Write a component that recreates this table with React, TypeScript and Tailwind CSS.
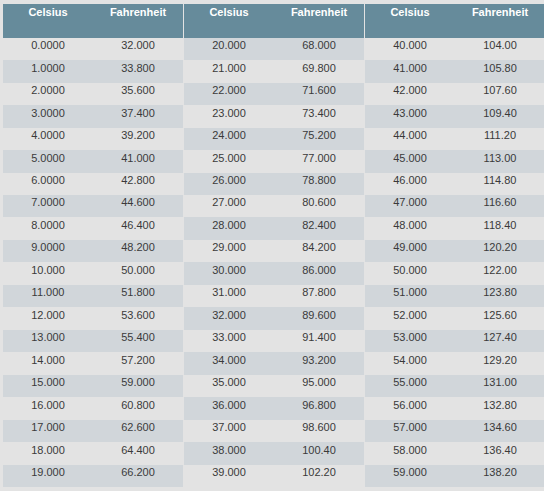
const font = { fontFamily: '"Liberation Sans", Arial, sans-serif' };

const tables = [0, 20, 40].map((start) =>
  Array.from({ length: 20 }, (_, i) => {
    const c = start + i;
    return { c: c.toPrecision(5), f: (c * 1.8 + 32).toPrecision(5) };
  })
);

function Table({ rows, flip }: { rows: { c: string; f: string }[]; flip: boolean }) {
  return (
    <div className="w-[180px] shrink-0">
      <div className="flex h-[33.7px] bg-[#668b9b] text-[11px] font-bold leading-[13px] text-white">
        <div className="w-[90px] pt-[2px] text-center">Celsius</div>
        <div className="w-[90px] pt-[2px] text-center">Fahrenheit</div>
      </div>
      {rows.map((r, i) => {
        const dark = flip ? i % 2 === 0 : i % 2 === 1;
        return (
          <div
            key={r.c}
            className={`flex h-[22.48px] text-[11px] leading-[13px] text-[#3a3a3a] ${
              dark ? 'bg-[#d1d6da]' : 'bg-[#e3e3e3]'
            }`}
          >
            <div className="w-[90px] pt-[1.5px] text-center">{r.c}</div>
            <div className="w-[90px] pt-[1.5px] text-center">{r.f}</div>
          </div>
        );
      })}
    </div>
  );
}

export default function App() {
  return (
    <div className="h-[491px] w-[544px] overflow-hidden bg-[#e3e3e3] pl-[3px] pt-[4px]" style={font}>
      <div className="flex gap-px">
        {tables.map((rows, t) => (
          <Table key={t} rows={rows} flip={t === 1} />
        ))}
      </div>
    </div>
  );
}
